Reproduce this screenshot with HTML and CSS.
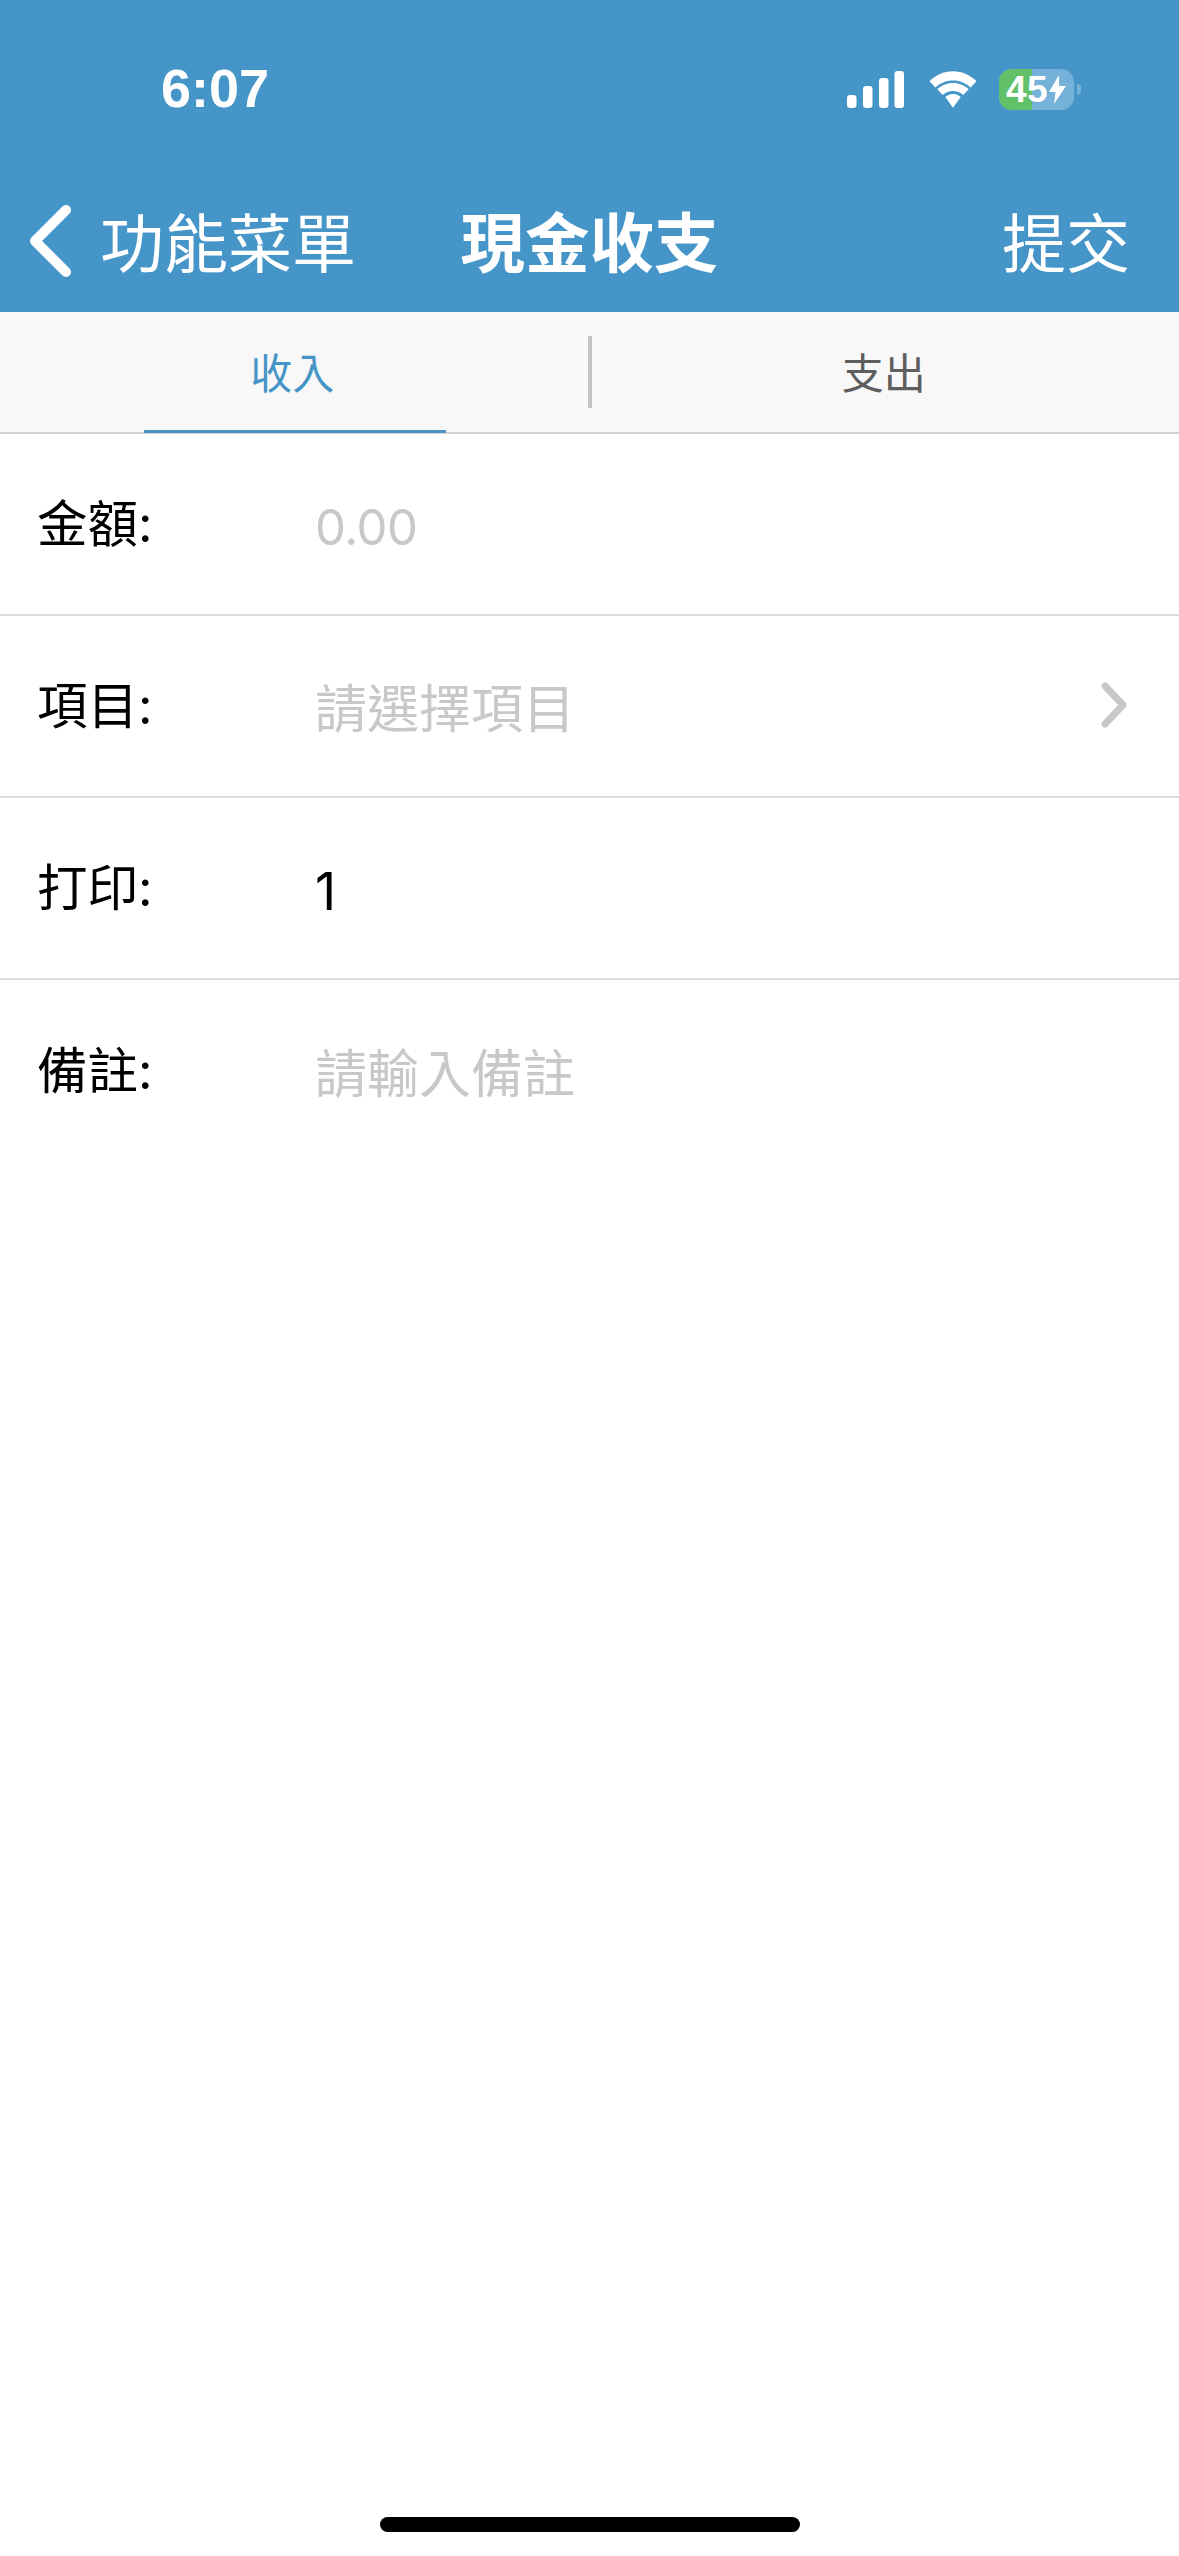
FILE: index.html
```html
<!DOCTYPE html>
<html lang="zh-Hant">
<head>
<meta charset="utf-8">
<title>現金收支</title>
<link rel="stylesheet" href="styles.css">
</head>
<body>
<div class="app">
  <header class="header">
    <div class="status">
      <span class="time">6:07</span>
      <div class="status-icons">
        <svg class="signal" width="57" height="37" viewBox="0 0 57 37"><rect x="0" y="24" width="9.500" height="13" rx="3" fill="#fff"/><rect x="16" y="15" width="9.500" height="22" rx="3" fill="#fff"/><rect x="32" y="7" width="9.500" height="30" rx="3" fill="#fff"/><rect x="47.500" y="0" width="9.500" height="37" rx="3" fill="#fff"/></svg>
        <svg class="wifi" width="52" height="37" viewBox="0 0 50 37"><path d="M25 9.500c7 0 13 2.700 17.600 7L48.500 10.300C42.500 4.300 34.300 .3 25 .3S7.500 4.300 1.500 10.300l5.900 6.200C12 12.200 18 9.500 25 9.500z" fill="#fff"/><path d="M25 20c4 0 7.500 1.500 10.200 4l5.500-5.800C36.600 14.400 31 12 25 12s-11.600 2.400-15.700 6.200L14.800 24C17.500 21.500 21 20 25 20z" fill="#fff"/><path d="M25 23c-3 0-5.600 1.100-7.700 3L25 36.800 32.700 26c-2.100-1.900-4.700-3-7.700-3z" fill="#fff"/></svg>
        <div class="battery">
          <div class="battery-body"><div class="battery-fill"></div><span class="battery-text">45</span>
            <svg class="bolt" width="17" height="29" viewBox="0 0 17 29"><path d="M10 0 0 17h6.500L5 29 17 11h-7z" fill="#fff"/></svg>
          </div>
          <div class="battery-nub"></div>
        </div>
      </div>
    </div>
    <nav class="nav">
      <div class="nav-left">
        <svg class="back" width="46" height="74" viewBox="0 0 46 74"><path d="M38 6 7 37l31 31" fill="none" stroke="#fff" stroke-width="10" stroke-linecap="round" stroke-linejoin="round"/></svg>
        <span class="nav-text">功能菜單</span>
      </div>
      <div class="nav-title">現金收支</div>
      <div class="nav-right"><span class="nav-text">提交</span></div>
    </nav>
  </header>

  <div class="tabs">
    <div class="tab tab-active"><span>收入</span><i class="tab-line"></i></div>
    <div class="tab-divider"></div>
    <div class="tab"><span>支出</span></div>
  </div>

  <main class="form">
    <div class="row"><span class="label">金額:</span><span class="value placeholder num">0.00</span></div>
    <div class="row"><span class="label">項目:</span><span class="value placeholder">請選擇項目</span>
      <svg class="chevron" width="26" height="46" viewBox="0 0 26 46"><path d="M4 4l18 19L4 42" fill="none" stroke="#c8c8c8" stroke-width="7" stroke-linecap="round" stroke-linejoin="round"/></svg>
    </div>
    <div class="row"><span class="label">打印:</span><span class="value">1</span></div>
    <div class="row row-last"><span class="label">備註:</span><span class="value placeholder">請輸入備註</span></div>
  </main>

  <div class="home-area"><div class="home-indicator"></div></div>
</div>
</body>
</html>
```
FILE: styles.css
```css
* { box-sizing: border-box; }
html, body { margin: 0; padding: 0; background: #fff; }
body { font-family: "Noto Sans CJK TC", "Noto Sans", sans-serif; }
.app { width: 1179px; height: 2556px; display: flex; flex-direction: column; overflow: hidden; }

.header { background: #4595c8; color: #fff; height: 312px; flex: none; }
.status { height: 172px; display: flex; align-items: flex-start; justify-content: space-between; padding: 58px 98px 0 161px; }
.time { font-family: "Liberation Sans", sans-serif; font-weight: 700; font-size: 54px; line-height: 60px; }
.status-icons { display: flex; align-items: center; gap: 20px; padding-top: 11px; }
.signal { margin-right: 3px; }
.battery { display: flex; align-items: center; gap: 3px; }
.battery-body { position: relative; width: 75px; height: 41px; border-radius: 13px; background: #74b2d9; display: flex; align-items: center; padding-left: 7px; }
.battery-fill { position: absolute; left: 0; top: 0; bottom: 0; width: 33px; border-radius: 13px 0 0 13px; background: #62c168; }
.battery-text { position: relative; font-family: "Liberation Sans", sans-serif; font-weight: 700; font-size: 37px; line-height: 41px; letter-spacing: 0.5px; }
.bolt { position: relative; margin-left: 1px; }
.battery-nub { width: 4px; height: 11px; border-radius: 0 4px 4px 0; background: #74b2d9; }

.nav { height: 134px; display: grid; grid-template-columns: 1fr auto 1fr; align-items: center; padding: 0 49px; }
.nav-left { display: flex; align-items: center; gap: 26px; margin-left: -21px; }
.back { margin-top: 4px; }
.nav-right { display: flex; justify-content: flex-end; }
.nav-text { font-size: 64px; line-height: 80px; font-weight: 400; }
.nav-title { font-size: 64.500px; line-height: 80px; font-weight: 700; }

.tabs { height: 122px; flex: none; background: #f8f8f8; border-bottom: 2px solid #d2d2d2; display: flex; align-items: center; }
.tab { position: relative; flex: 1; height: 100%; display: flex; align-items: center; justify-content: center; color: #5e5e5e; font-size: 42px; padding: 0 3px 3px 0; }
.tab-active { color: #4595c8; }
.tab-line { position: absolute; left: 144px; width: 302px; bottom: -1px; height: 3px; background: #4d94c4; }
.tab-divider { width: 4px; height: 72px; background: #c4c4c4; flex: none; }

.form { flex: none; }
.row { height: 182px; border-bottom: 2px solid #dcdcdc; display: flex; align-items: center; padding-left: 37px; padding-right: 52px; }
.row-last { border-bottom: none; }
.label { width: 278px; flex: none; font-family: Inter, "Noto Sans CJK TC", sans-serif; font-size: 50.500px; line-height: 64px; color: #000; margin-top: 0; }
.value { flex: 1; font-family: Inter, "Noto Sans CJK TC", sans-serif; font-size: 52px; line-height: 68px; color: #000; margin-top: 7px; }
.num { font-size: 49px; letter-spacing: -0.5px; }
.placeholder { color: #c8c8c8; }
.chevron { flex: none; margin-top: -3px; }

.home-area { flex: 1; display: flex; align-items: flex-end; justify-content: center; padding-bottom: 24px; }
.home-indicator { width: 420px; height: 15px; border-radius: 8px; background: #000; }
```
